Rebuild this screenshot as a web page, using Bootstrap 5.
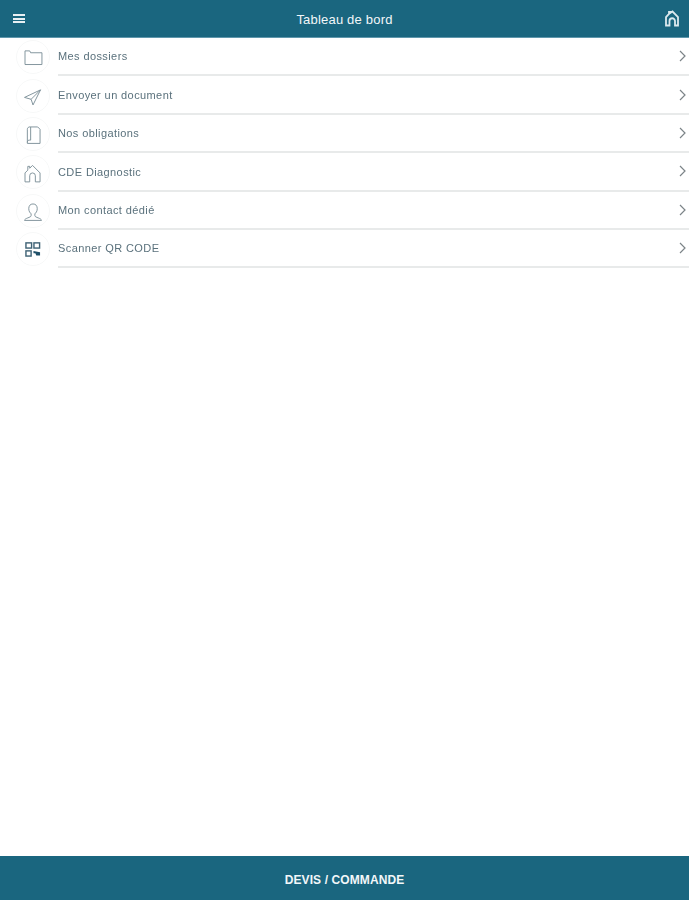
<!DOCTYPE html>
<html lang="fr">
<head>
  <meta charset="UTF-8" />
  <meta name="viewport" content="width=device-width, initial-scale=1" />
  <title>Tableau de bord</title>
  <link href="https://cdn.jsdelivr.net/npm/bootstrap@5.3.2/dist/css/bootstrap.min.css" rel="stylesheet">
  <style>
    body { background: #fff; font-family: "Liberation Sans", Arial, sans-serif; height: 900px; overflow: hidden; }
    .app-shell { height: 900px; filter: blur(.4px); }
    .top-bar { height: 38px; background: #1a667f; color: #fff; border-bottom: 1px solid #5f97ac; }
    .top-title { font-size: 13px; font-weight: 500; color: #f2f7f9; letter-spacing: .2px; padding-top: 2px; margin-left: 4px; }
    .burger { width: 12px; height: 9px; border-top: 2px solid #e8f0f3; border-bottom: 2px solid #e8f0f3; position: relative; left: 13px; }
    .burger::after { content: ""; display: block; height: 2px; margin-top: 1.5px; background: #e8f0f3; }
    .home-top { position: relative; left: -9px; }
    .menu-row { height: 38.4px; }
    .icon-disc { width: 34px; height: 34px; margin-left: 16px; margin-right: 8px; border: 1px solid #f7f8f8; border-radius: 50%; flex: none; }
    .menu-body { height: 100%; border-bottom: 2px solid #e8eaea; min-width: 0; padding-top: 1px; }
    .menu-label { font-size: 11px; color: #5a717c; letter-spacing: .4px; }
    .menu-arrow { margin-right: 3px; margin-bottom: 1px; }
    .bottom-bar { height: 44px; background: #1a667f; color: #f2f7f9; font-size: 12px; font-weight: 700; letter-spacing: .1px; padding-top: 4px; }
  </style>
</head>
<body>
  <div class="app-shell d-flex flex-column">
    <header class="top-bar d-flex align-items-center justify-content-between flex-shrink-0">
      <span class="burger"></span>
      <span class="top-title">Tableau de bord</span>
      <svg class="home-top" width="16" height="17" viewBox="0 0 16 17" fill="none" stroke="#dce9ee" stroke-width="1.8"><path d="M2 15.500V7l3-3V2h1.500v.8L8.500 1.500 14 7v8.500h-3V11a2.700 2.700 0 0 0-5.500 0v4.500z"/></svg>
    </header>

    <main class="flex-grow-1" id="menu-list"></main>

    <footer class="bottom-bar d-flex align-items-center justify-content-center flex-shrink-0">DEVIS / COMMANDE</footer>
  </div>

  <script src="https://cdn.jsdelivr.net/npm/bootstrap@5.3.2/dist/js/bootstrap.bundle.min.js"></script>
  <script>
    const stroke = 'fill="none" stroke="#7d9099" stroke-width="1"';
    const menuItems = [
      { label: "Mes dossiers", icon: `<path ${stroke} d="M8.500 25V10.500h5l1 2h12V25z"/>` },
      { label: "Envoyer un document", icon: `<path ${stroke} d="M8 18.500l17-8-8 16-2-6zM15 20.500l10-10"/>` },
      { label: "Nos obligations", icon: `<path ${stroke} d="M14 9.500h8l2.500 2.500v15H11V12a2.500 2.500 0 0 1 3-2.500zM11 26c0-2 1-2.500 2.500-2.500h1V9.500"/>` },
      { label: "CDE Diagnostic", icon: `<path ${stroke} d="M8.500 18l3-3v-4h2v2l3-3 8 8v9.500h-5V21a3 3 0 0 0-6 0v6.500h-5z"/>` },
      { label: "Mon contact dédié", icon: `<path ${stroke} d="M17 9.500c-3 0-4.500 2-4.500 5s1.500 4.500 2.500 5.500v2c0 2-7 2.500-7 5h18c0-2.500-7-3-7-5v-2c1-1 2.500-2.500 2.500-5.500s-1.500-5-4.500-5z"/>` },
      { label: "Scanner QR CODE", icon: `<g fill="none" stroke="#3f6275" stroke-width="1.500"><rect x="9.500" y="10.500" width="6" height="5.500"/><rect x="18" y="10.500" width="6" height="5.500"/><rect x="9.500" y="19" width="5.500" height="5.500"/></g><path fill="#1f4f68" d="M17.500 19l7 1.500v3.500h-4l-1-2.500h-2z"/>` }
    ];

    const list = document.getElementById("menu-list");
    menuItems.forEach(item => {
      const row = document.createElement("div");
      row.className = "menu-row d-flex align-items-center";
      row.innerHTML = `
        <span class="icon-disc d-flex align-items-center justify-content-center">
          <svg width="34" height="34" viewBox="0 0 34 34">${item.icon}</svg>
        </span>
        <div class="menu-body flex-grow-1 d-flex align-items-center justify-content-between">
          <span class="menu-label">${item.label}</span>
          <svg class="menu-arrow" width="7" height="12" viewBox="0 0 7 12" fill="none" stroke="#7c8488" stroke-width="1.200"><path d="M1 1l5 5-5 5"/></svg>
        </div>
      `;
      list.appendChild(row);
    });
  </script>
</body>
</html>
